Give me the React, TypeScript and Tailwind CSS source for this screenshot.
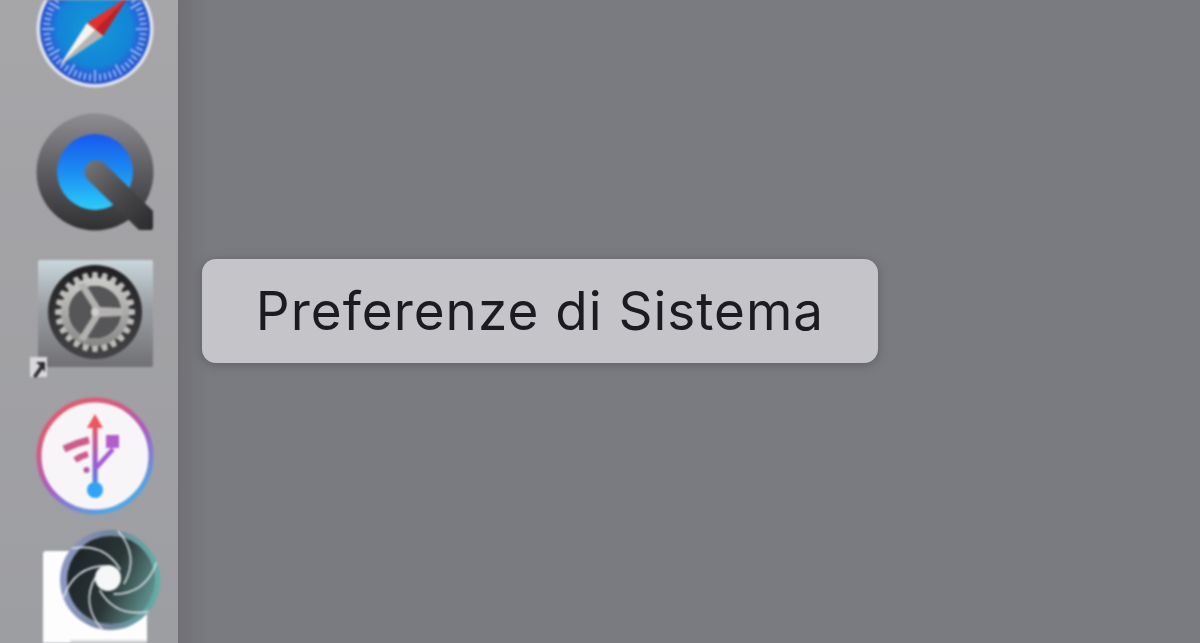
const ticks = Array.from({ length: 60 }, (_, i) => i * 6);
const gearTeeth = Array.from({ length: 24 }, (_, i) => i * 15);
const blades = [0, 60, 120, 180, 240, 300];

function SafariIcon() {
  return (
    <svg className="block w-[140px] h-[92px]" viewBox="25 0 140 92">
      <defs>
        <radialGradient id="safariFill" gradientUnits="userSpaceOnUse" cx="95" cy="29" r="55">
          <stop offset="0" stopColor="#149ad6" />
          <stop offset="0.68" stopColor="#1384d8" />
          <stop offset="0.8" stopColor="#2566d6" />
          <stop offset="1" stopColor="#2854cc" />
        </radialGradient>
      </defs>
      <circle cx="95" cy="29" r="58.5" fill="#dfe3ec" />
      <circle cx="95" cy="29" r="55" fill="url(#safariFill)" />
      {ticks.map((a) => (
        <line
          key={a}
          x1="95"
          y1={a % 30 === 0 ? -24 : -23}
          x2="95"
          y2={a % 30 === 0 ? -12 : -16}
          stroke="#a9c9f4"
          strokeWidth="1.6"
          transform={`rotate(${a} 95 29)`}
        />
      ))}
      <polygon points="128,-3 103,36 87,23" fill="#e5302e" />
      <polygon points="128,-3 103,36 95,30" fill="#b8222a" />
      <polygon points="60,65 87,23 103,36" fill="#f5f3f1" />
      <polygon points="60,65 103,36 95,30" fill="#b6b4b2" />
    </svg>
  );
}

function QuickTimeIcon() {
  return (
    <svg className="block w-[140px] h-[126px]" viewBox="25 108 140 126">
      <defs>
        <linearGradient id="qtRing" x1="0" y1="0" x2="0" y2="1">
          <stop offset="0" stopColor="#8d8d92" />
          <stop offset="0.5" stopColor="#5c5c60" />
          <stop offset="1" stopColor="#303032" />
        </linearGradient>
        <linearGradient id="qtBlue" x1="0" y1="0" x2="0" y2="1">
          <stop offset="0" stopColor="#1858ee" />
          <stop offset="0.5" stopColor="#1b8df2" />
          <stop offset="1" stopColor="#2ccdf9" />
        </linearGradient>
        <linearGradient id="qtTail" x1="0" y1="0" x2="1" y2="1">
          <stop offset="0" stopColor="#77777a" />
          <stop offset="0.5" stopColor="#4a4a4c" />
          <stop offset="1" stopColor="#2a2a2c" />
        </linearGradient>
      </defs>
      <circle cx="95" cy="172" r="58.5" fill="url(#qtRing)" />
      <circle cx="95" cy="172" r="38" fill="url(#qtBlue)" />
      <path
        d="M88 164 a11 11 0 0 1 16 -1 L153 211 V227 L152 230 H139 L88 180 a11 11 0 0 1 0 -16 Z"
        fill="url(#qtTail)"
      />
    </svg>
  );
}

function PreferencesIcon() {
  return (
    <svg className="block w-[140px] h-[126px]" viewBox="25 256 140 126">
      <defs>
        <linearGradient id="prefBg" x1="0" y1="0" x2="0" y2="1">
          <stop offset="0" stopColor="#c9d7dd" />
          <stop offset="0.45" stopColor="#9a9ea2" />
          <stop offset="1" stopColor="#717175" />
        </linearGradient>
        <linearGradient id="prefDark" x1="0" y1="0" x2="0" y2="1">
          <stop offset="0" stopColor="#202022" />
          <stop offset="1" stopColor="#444446" />
        </linearGradient>
        <linearGradient id="prefGear" gradientUnits="userSpaceOnUse" x1="0" y1="272" x2="0" y2="354">
          <stop offset="0" stopColor="#d2d2d0" />
          <stop offset="1" stopColor="#807f7e" />
        </linearGradient>
      </defs>
      <rect x="38" y="260" width="115" height="107" rx="2" fill="url(#prefBg)" />
      <circle cx="95" cy="312" r="47" fill="url(#prefDark)" />
      {gearTeeth.map((a) => (
        <polygon
          key={a}
          points="91,282 92.6,272 97.4,272 99,282"
          fill="#bcbcba"
          transform={`rotate(${a} 95 312)`}
        />
      ))}
      <circle cx="95" cy="312" r="30" fill="none" stroke="url(#prefGear)" strokeWidth="8" />
      <circle cx="95" cy="312" r="26" fill="#565658" />
      <path
        d="M92 307 L78 285 L85 283 L100 307 L123 308 V316 L100 317 L85 341 L78 339 L92 317 Z"
        fill="#b2b1b0"
      />
      <circle cx="95" cy="312" r="4" fill="#cfcfcd" />
      <rect x="30" y="357" width="17" height="20" fill="#d9d9dc" />
      <path d="M33 376 L40 366 L36 362 H45 V372 L42.5 369 L36 378 Z" fill="#2c2d30" />
    </svg>
  );
}

function UsbIcon() {
  return (
    <svg className="block w-[140px] h-[128px]" viewBox="25 392 140 128">
      <defs>
        <linearGradient id="usbRing" x1="0" y1="0" x2="0.6" y2="1">
          <stop offset="0" stopColor="#e45e60" />
          <stop offset="0.35" stopColor="#d35a84" />
          <stop offset="0.62" stopColor="#a85cc8" />
          <stop offset="1" stopColor="#4fa6e4" />
        </linearGradient>
        <linearGradient id="usbLine" x1="0" y1="0" x2="0" y2="1">
          <stop offset="0" stopColor="#ee5560" />
          <stop offset="0.55" stopColor="#9a5cd0" />
          <stop offset="1" stopColor="#3d8fe8" />
        </linearGradient>
      </defs>
      <circle cx="95" cy="456" r="56" fill="#f7f5f7" stroke="url(#usbRing)" strokeWidth="5" />
      <polygon points="95,414 103,428 87,428" fill="#ee5560" />
      <rect x="92.6" y="424" width="5" height="66" fill="url(#usbLine)" />
      <path d="M96 468 L113 449" stroke="#a25cd0" strokeWidth="4.5" fill="none" />
      <rect x="106" y="435" width="13" height="13" fill="#b45ccc" />
      <circle cx="95" cy="490" r="8" fill="#2fa4f5" />
      <path d="M64 449 Q76 443 89 440" stroke="#cf5a8c" strokeWidth="7" fill="none" />
      <path d="M75 460 Q81 456 88 454" stroke="#cf5a8c" strokeWidth="6" fill="none" />
      <circle cx="86.5" cy="470" r="3" fill="#b45a9c" />
    </svg>
  );
}

function ShutterIcon() {
  return (
    <svg className="block w-[140px] h-[117px]" viewBox="25 526 140 117">
      <defs>
        <linearGradient id="shutterRim" x1="0" y1="0" x2="1" y2="0">
          <stop offset="0" stopColor="#8d99c6" />
          <stop offset="0.5" stopColor="#74859c" />
          <stop offset="1" stopColor="#5eb0a8" />
        </linearGradient>
        <linearGradient id="shutterFill" x1="0" y1="0.2" x2="1" y2="0.6">
          <stop offset="0" stopColor="#1c2228" />
          <stop offset="0.55" stopColor="#2a3636" />
          <stop offset="1" stopColor="#5f918e" />
        </linearGradient>
      </defs>
      <rect x="43" y="551" width="104" height="100" rx="3" fill="#fdfdfe" />
      <rect x="70" y="640" width="77" height="3" fill="#dcdcde" />
      <circle cx="110" cy="580" r="50" fill="url(#shutterRim)" />
      <circle cx="111" cy="580" r="44" fill="url(#shutterFill)" />
      <circle cx="108" cy="578" r="13" fill="#f6f8f8" />
      {blades.map((a) => (
        <path
          key={a}
          d="M118 531 Q140 556 124 584"
          stroke="#dfe3ea"
          strokeWidth="1.6"
          fill="none"
          transform={`rotate(${a} 110 580)`}
        />
      ))}
    </svg>
  );
}

export default function App() {
  return (
    <div
      className="flex h-[643px] w-[1200px] overflow-hidden"
      style={{ fontFamily: "Inter, 'Liberation Sans', sans-serif" }}
    >
      <aside className="flex h-full w-[178px] shrink-0 flex-col overflow-hidden bg-gradient-to-b from-[#a6a5a8] to-[#9d9ea2] pl-[25px]">
        <div className="blur-[0.9px]">
          <SafariIcon />
        </div>
        <div className="mt-4 blur-[0.9px]">
          <QuickTimeIcon />
        </div>
        <div className="mt-[22px] blur-[0.9px]">
          <PreferencesIcon />
        </div>
        <div className="mt-[10px] blur-[0.9px]">
          <UsbIcon />
        </div>
        <div className="mt-[6px] blur-[0.9px]">
          <ShutterIcon />
        </div>
      </aside>
      <main className="flex-1 bg-gradient-to-r from-[#707075] to-[#7a7b80] to-[3%] pl-6 pt-[259px]">
        <div className="flex h-[104px] w-[676px] items-center justify-center rounded-[14px] bg-[#c5c4c9] shadow-[0_2px_10px_rgba(50,50,55,0.35)]">
          <span className="text-[53px] leading-none tracking-[1px] text-[#1b1b21] blur-[0.5px]">Preferenze di Sistema</span>
        </div>
      </main>
    </div>
  );
}
